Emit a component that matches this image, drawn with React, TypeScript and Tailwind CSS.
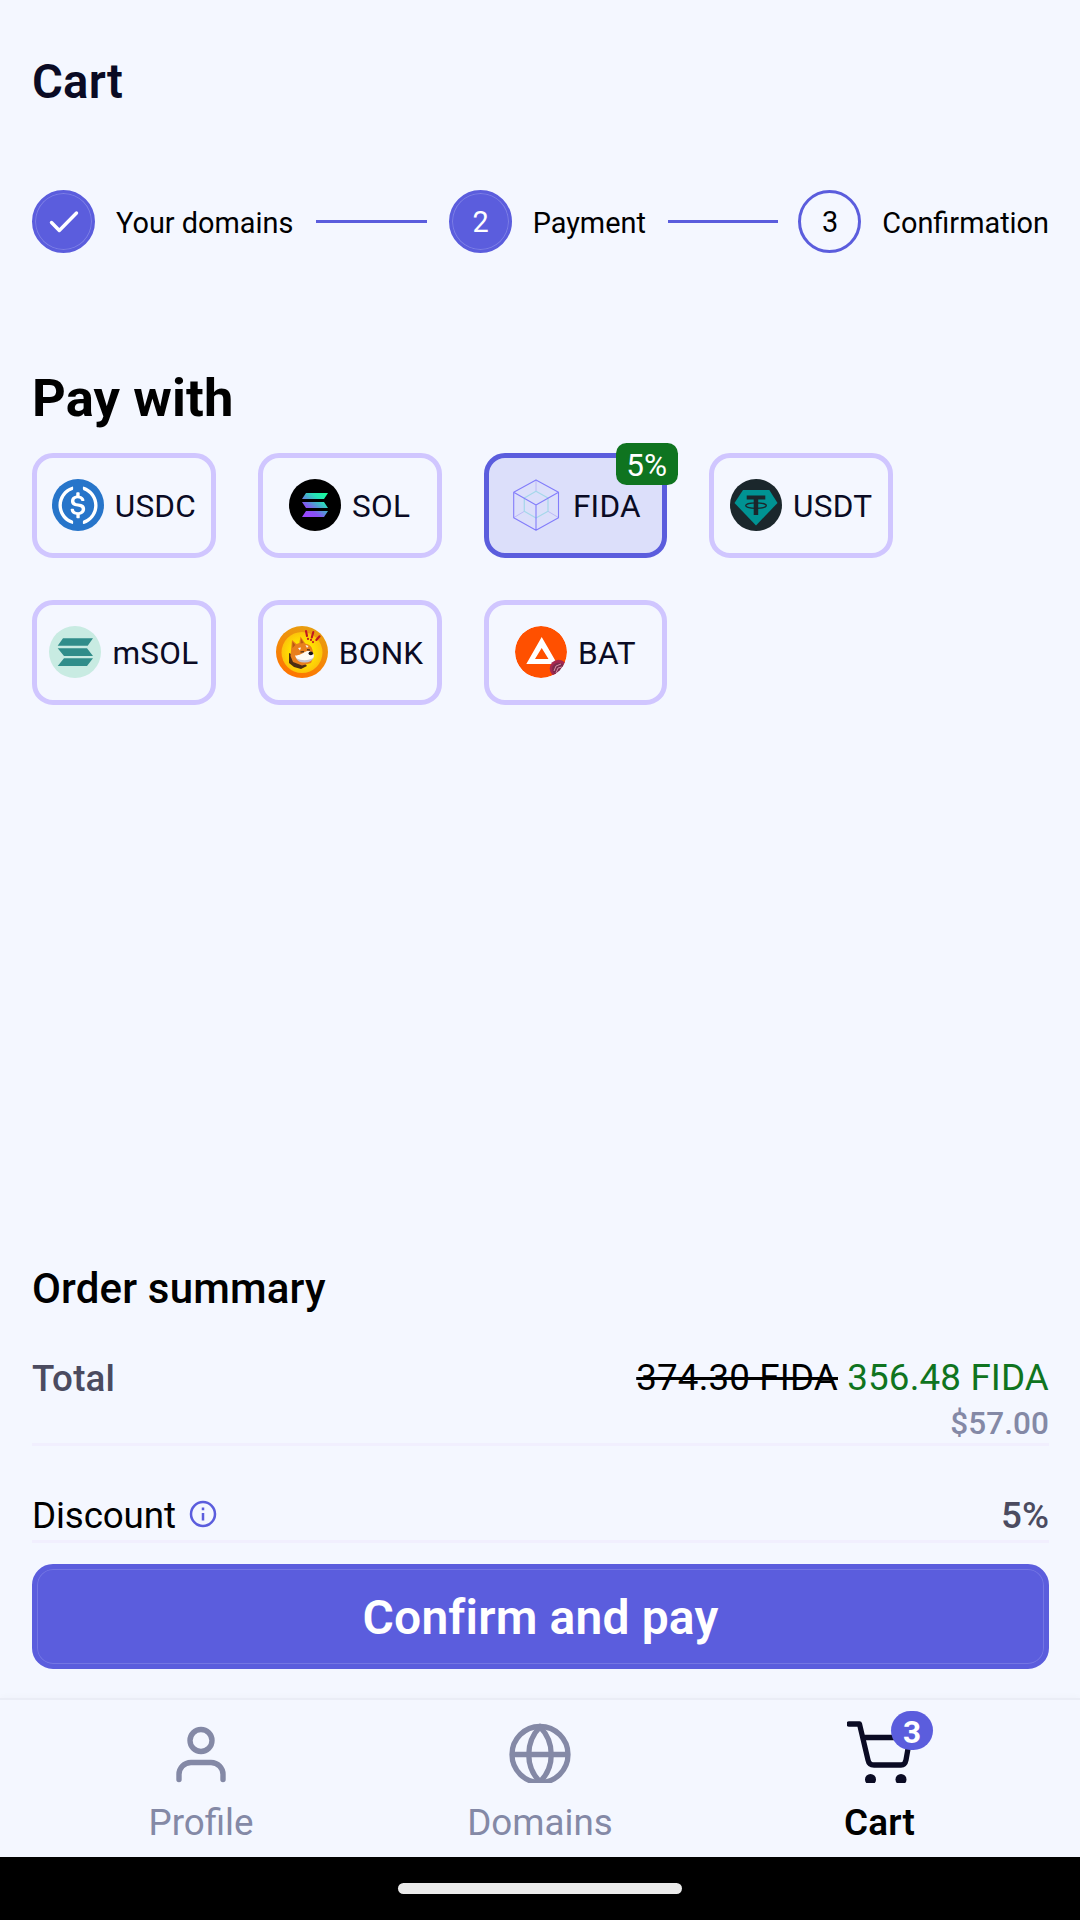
import type { ReactNode } from "react";

function Logo({ children }: { children: ReactNode }) {
  return (
    <svg viewBox="0 0 52 52" className="-mt-px size-[52px] shrink-0">
      {children}
    </svg>
  );
}

const Usdc = () => (
  <svg viewBox="0 0 2000 2000" className="-mt-px size-[52px] shrink-0">
    <circle cx="1000" cy="1000" r="1000" fill="#2775ca" />
    <path
      fill="#fff"
      d="M1275 1158.33c0-145.83-87.5-195.83-262.5-216.66-125-16.67-150-50-150-108.34s41.67-95.83 125-95.83c75 0 116.67 25 137.5 87.5 4.17 12.5 16.67 20.83 29.17 20.83h66.66c16.67 0 29.17-12.5 29.17-29.16v-4.17c-16.67-91.67-91.67-162.5-187.5-170.83v-100c0-16.67-12.5-29.17-33.33-33.34h-62.5c-16.67 0-29.17 12.5-33.34 33.34v95.83c-125 16.67-204.16 100-204.16 204.17 0 137.5 83.33 191.66 258.33 212.5 116.67 20.83 154.17 45.83 154.17 112.5s-58.34 112.5-137.5 112.5c-108.34 0-145.84-45.84-158.34-108.34-4.16-16.66-16.66-25-29.16-25h-70.84c-16.66 0-29.16 12.5-29.16 29.17v4.17c16.66 104.16 83.33 179.16 220.83 200v100c0 16.66 12.5 29.16 33.33 33.33h62.5c16.67 0 29.17-12.5 33.34-33.33v-100c125-20.84 208.33-108.34 208.33-220.84z"
    />
    <path
      fill="#fff"
      d="M787.5 1595.83c-325-116.66-491.67-479.16-370.83-800 62.5-175 200-308.33 370.83-370.83 16.67-8.33 25-20.83 25-41.67V325c0-16.67-8.33-29.17-25-33.33-4.17 0-12.5 0-16.67 4.16-395.83 125-612.5 545.84-487.5 941.67 75 233.33 254.17 412.5 487.5 487.5 16.67 8.33 33.34 0 37.5-16.67 4.17-4.16 4.17-8.33 4.17-16.66v-58.34c0-12.5-12.5-29.16-25-37.5zM1229.17 295.83c-16.67-8.33-33.34 0-37.5 16.67-4.17 4.17-4.17 8.33-4.17 16.67v58.33c0 16.67 12.5 33.33 25 41.67 325 116.66 491.67 479.16 370.83 800-62.5 175-200 308.33-370.83 370.83-16.67 8.33-25 20.83-25 41.67V1700c0 16.67 8.33 29.17 25 33.33 4.17 0 12.5 0 16.67-4.16 395.83-125 612.5-545.84 487.5-941.67-75-237.5-258.34-416.67-487.5-491.67z"
    />
  </svg>
);

const Sol = () => (
  <Logo>
    <defs>
      <linearGradient id="sol" gradientUnits="userSpaceOnUse" x1="16" y1="39" x2="36" y2="13">
        <stop offset="0.08" stopColor="#9945ff" />
        <stop offset="0.3" stopColor="#8752f3" />
        <stop offset="0.5" stopColor="#5497d5" />
        <stop offset="0.72" stopColor="#28e0b9" />
        <stop offset="0.97" stopColor="#19fb9b" />
      </linearGradient>
    </defs>
    <circle cx="26" cy="26" r="26" fill="#000" />
    <path
      fill="url(#sol)"
      d="M17 14H39L35 20H13ZM13 23H35L39 29H17ZM17 32H39L35 38H13Z"
    />
  </Logo>
);

const Fida = () => (
  <Logo>
    <g fill="none" strokeLinejoin="round">
      <path
        stroke="#b9b4f6"
        strokeWidth="0.9"
        d="M26 .9V12.3M3.7 38.7L14.3 32.3M48.7 38.7L38 32.3"
      />
      <path
        stroke="#a5d8ea"
        strokeWidth="1.2"
        d="M26 12.3L38 19V32.3L26 39L14.3 32.3V19Z"
      />
      <path
        stroke="#837dfa"
        strokeWidth="1.1"
        d="M26 .9L48.5 13.3V38.7L26 51.2L3.7 38.7V13.3ZM3.7 13.3L26 26L48.5 13.3M26 26V51.2"
      />
    </g>
  </Logo>
);

const Usdt = () => (
  <Logo>
    <circle cx="26" cy="26" r="26" fill="#1b272c" />
    <path fill="#009393" d="M13 11H39.3L47.5 24L26 46.4L4.5 24Z" />
    <path fill="#1b272c" d="M16.7 16.4H35.3V20.4H28.2V36H23.7V20.4H16.7Z" />
    <ellipse cx="26" cy="26.6" rx="10.3" ry="2.8" fill="none" stroke="#1b272c" strokeWidth="1.3" />
  </Logo>
);

const Msol = () => (
  <Logo>
    <circle cx="26" cy="26" r="26" fill="#c8ebe2" />
    <path
      fill="#308d8a"
      d="M14 12.3H44L38.7 19.7H8.7ZM8.7 22.3H38L44 30H15ZM15 32.3H44L38 40H8.7Z"
    />
  </Logo>
);

const Bonk = () => (
  <Logo>
    <defs>
      <linearGradient id="bonkRim" x1="0.7" y1="0" x2="0.3" y2="1">
        <stop offset="0" stopColor="#e7a011" />
        <stop offset="1" stopColor="#ff7300" />
      </linearGradient>
      <radialGradient id="bonkSun">
        <stop offset="0.5" stopColor="#ffe600" />
        <stop offset="1" stopColor="#fcc30a" />
      </radialGradient>
    </defs>
    <circle cx="26" cy="26" r="26" fill="url(#bonkRim)" />
    <circle cx="26" cy="26.5" r="20.5" fill="url(#bonkSun)" />
    <path fill="#4a2c12" d="M13 27L13 37L18 41L25 43L31 40L24 32Z" />
    <path
      fill="#e87f1c"
      d="M15.2 22L16 14L20.5 18L23.3 17L24.5 10.5L29.3 17.5C33 18 35.5 20 36.5 24L38 30L35 37L26 39.5L17 36L14.5 30Z"
    />
    <path fill="#b85a12" d="M16.5 15.5L19.3 19L16.5 22ZM25 12.5L27.6 17L24.5 17.5Z" />
    <path fill="#fffaf0" d="M19 29.5C24 29.5 26.5 27 30 25.5C34 24 38 27 38 30C37.5 34 33 36 28 35.5C23 35.5 20 33 19 29.5Z" />
    <path fill="#c4c1cb" d="M20 32C25 35 33 35 37.5 31.5C36 35 33 36.7 28 36.5C24 36.5 21.5 35 20 32Z" />
    <path fill="#fff6e8" d="M22 22L25 21.5L24 24.5ZM29.5 19L32.5 20L31 22Z" />
    <path stroke="#241a18" strokeWidth="1.1" fill="none" d="M24.5 26L28 25.7M31 23.7L34 24" />
    <ellipse cx="34.8" cy="27.4" rx="2.3" ry="1.8" fill="#171316" />
    <path
      stroke="#c01722"
      strokeWidth="2.1"
      strokeLinecap="round"
      d="M30 5L31 10M37.3 6L35.8 11.5M43.6 10.3L40.3 14M32 12.8V12.9M35 13.9V14M37 16V16.1"
    />
  </Logo>
);

const Bat = () => (
  <Logo>
    <clipPath id="bat">
      <circle cx="26" cy="26" r="26" />
    </clipPath>
    <g clipPath="url(#bat)">
      <circle cx="26" cy="26" r="26" fill="#ff5000" />
      <path
        fill="#fff"
        fillRule="evenodd"
        d="M26.7 11L42.3 38H11.3ZM26.7 22L20 33H33.5Z"
      />
      <circle cx="43.5" cy="42.5" r="8.8" fill="#a6264f" />
      <circle cx="43.5" cy="43" r="6.3" fill="#7a2a4c" />
      <path stroke="#d68ca4" strokeWidth="1" fill="none" d="M39 45L41 40L46 38M41 47L43 42L47 41" />
    </g>
  </Logo>
);

const coins: { name: string; logo: ReactNode; badge?: string }[] = [
  { name: "USDC", logo: <Usdc /> },
  { name: "SOL", logo: <Sol /> },
  { name: "FIDA", logo: <Fida />, badge: "5%" },
  { name: "USDT", logo: <Usdt /> },
  { name: "mSOL", logo: <Msol /> },
  { name: "BONK", logo: <Bonk /> },
  { name: "BAT", logo: <Bat /> },
];

function Coin({ name, logo, badge }: { name: string; logo: ReactNode; badge?: string }) {
  return (
    <div
      className={
        badge
          ? "relative flex h-[105px] items-center justify-center gap-[11px] rounded-[21px] border-[5px] border-[#5b5ddd] bg-[#dcdffa]"
          : "relative flex h-[105px] items-center justify-center gap-[11px] rounded-[21px] border-[5px] border-[#d0c6ff]"
      }
    >
      {logo}
      <span className="pt-[2px] text-[31.5px] leading-[38px] tracking-[0.25px] text-[#0a0b24]">{name}</span>
      {badge && (
        <span className="absolute -top-[15px] -right-[15.5px] flex h-[42px] w-[62px] items-center justify-center rounded-[10.5px] bg-[#0f7420] pt-[3px] text-[31.5px] leading-none text-white">
          {badge}
        </span>
      )}
    </div>
  );
}

function StepLabel({ children }: { children: ReactNode }) {
  return (
    <span className="ml-[21px] pt-[2px] text-[28.875px] leading-[34px] whitespace-nowrap">{children}</span>
  );
}

function StepDot({ children, filled }: { children: ReactNode; filled?: boolean }) {
  return (
    <div
      className={
        filled
          ? "flex size-[63px] shrink-0 items-center justify-center rounded-full border-[3px] border-[#5b5ddd] bg-[#5b5ddd] text-[28.875px] text-white inset-ring-1 inset-ring-[#7d7fe5]"
          : "flex size-[63px] shrink-0 items-center justify-center rounded-full border-[3px] border-[#5b5ddd] text-[28.875px]"
      }
    >
      {children}
    </div>
  );
}

export default function App() {
  return (
    <div className="flex h-[1920px] w-[1080px] flex-col overflow-hidden bg-[#f4f7ff] font-['Roboto',sans-serif] text-black">
      <main className="flex flex-1 flex-col pr-[31px] pl-8">
        <h1 className="mt-[54px] text-[47.25px] leading-[56px] font-semibold tracking-[0.2px] text-[#0a0b24]">Cart</h1>

        <div className="mt-20 flex items-center">
          <StepDot filled>
            <svg viewBox="0 0 30 24" className="h-6 w-[30px]" fill="none" stroke="#fff" strokeWidth="3.4" strokeLinecap="round" strokeLinejoin="round">
              <path d="M2.5 12.5L10.3 20.5L27.5 3" />
            </svg>
          </StepDot>
          <StepLabel>Your domains</StepLabel>
          <div className="mr-[22px] ml-[23px] h-[3px] flex-1 bg-[#5b5ddd]" />
          <StepDot filled>
            <span className="pt-[3px] pl-px">2</span>
          </StepDot>
          <StepLabel>Payment</StepLabel>
          <div className="mr-5 ml-[22px] h-[3px] flex-1 bg-[#5b5ddd]" />
          <StepDot>
            <span className="pt-[3px] pl-px">3</span>
          </StepDot>
          <StepLabel>Confirmation</StepLabel>
        </div>

        <h2 className="mt-[115px] text-[52.5px] leading-[60px] font-bold tracking-[0.15px]">Pay with</h2>
        <div className="mt-[25px] grid w-[861px] grid-cols-4 gap-[42px]">
          {coins.map((c) => (
            <Coin key={c.name} {...c} />
          ))}
        </div>

        <h3 className="mt-auto text-[42px] leading-[50px] font-medium tracking-[0.17px]">Order summary</h3>
        <div className="mt-[43px] flex h-[89px] justify-between border-b-[3px] border-[#f1effe] text-[36.75px] leading-[44px]">
          <span className="font-medium tracking-[0.2px] text-[#4b4b60]">Total</span>
          <div className="text-right">
            <div className="leading-[42px] tracking-[0.15px]">
              <span className="line-through decoration-[2.5px]">374.30 FIDA</span>{" "}
              <span className="text-[#0f7420]">356.48 FIDA</span>
            </div>
            <div className="text-[31.5px] leading-[50px] font-medium tracking-[0.1px] text-[#8489a6]">$57.00</div>
          </div>
        </div>
        <div className="mt-[48px] flex h-[49px] justify-between border-b-[3px] border-[#f1effe] text-[36.75px] leading-[44px]">
          <div className="flex">
            <span className="tracking-[-0.12px]">Discount</span>
            <svg viewBox="0 0 28 28" className="mt-[6px] ml-[13px] size-7" fill="none" stroke="#5b5ddd" strokeWidth="2.5">
              <circle cx="14" cy="14" r="12" />
              <path d="M14 13V20.5M14 7.5V10.3" />
            </svg>
          </div>
          <span className="font-medium text-[#4b4b60]">5%</span>
        </div>
        <button className="mt-[21px] mb-[29px] flex h-[105px] shrink-0 items-center justify-center rounded-[21px] border-[5px] border-[#5b5ddd] bg-[#5b5ddd] pt-[2px] text-[48px] leading-[56px] font-semibold tracking-[0.15px] text-white inset-ring-1 inset-ring-[#7476e3]">
          Confirm and pay
        </button>
      </main>

      <nav className="flex h-[159px] justify-center border-t-[2px] border-[#eaedf6] text-[36.75px] leading-[44px] text-[#8489a6] shadow-[0_-2px_6px_rgba(0,0,0,0.02)]">
        <div className="flex w-[339px] flex-col items-center">
          <svg viewBox="0 0 64 62" className="mt-[21px] h-[62px] w-16 shrink-0" fill="none" stroke="currentColor" strokeWidth="5.4" strokeLinecap="round">
            <circle cx="32" cy="19.5" r="11" />
            <path d="M10 58.5V54A12 12 0 0 1 22 41.5H42A12 12 0 0 1 54 54V58.5" />
          </svg>
          <span className="mt-[18px]">Profile</span>
        </div>
        <div className="flex w-[339px] flex-col items-center">
          <svg viewBox="0 0 64 62" className="mt-[21px] h-[62px] w-16 shrink-0" fill="none" stroke="currentColor" strokeWidth="5.3">
            <circle cx="32" cy="33.5" r="28" />
            <path d="M4 33.5H60M32 6C17 21 17 46 32 61C47 46 47 21 32 6Z" />
          </svg>
          <span className="mt-[18px]">Domains</span>
        </div>
        <div className="flex w-[339px] flex-col items-center font-semibold text-black">
          <div className="relative mt-[21px] h-[62px] w-16">
            <svg viewBox="0 0 64 62" className="h-[62px] w-16" fill="none" stroke="#0a0b24" strokeWidth="5.3" strokeLinecap="round" strokeLinejoin="round">
              <path d="M2 3H12.5L21 39Q22 44 27 44H54Q58 44 59 39L63 16.5H16" />
              <circle cx="23.5" cy="58.5" r="5.5" fill="#0a0b24" stroke="none" />
              <circle cx="54" cy="58.5" r="5.5" fill="#0a0b24" stroke="none" />
            </svg>
            <span className="absolute -top-[10px] left-[44px] flex h-[39px] w-[42px] items-center justify-center rounded-[20px] bg-[#5b5ddd] pt-[5px] text-[31.5px] leading-none font-bold text-white">
              3
            </span>
          </div>
          <span className="mt-[18px] pl-px tracking-[0.2px]">Cart</span>
        </div>
      </nav>
      <div className="flex h-[63px] justify-center bg-black pt-[26px]">
        <div className="h-[11px] w-[284px] rounded-full bg-[#ebebeb]" />
      </div>
    </div>
  );
}
